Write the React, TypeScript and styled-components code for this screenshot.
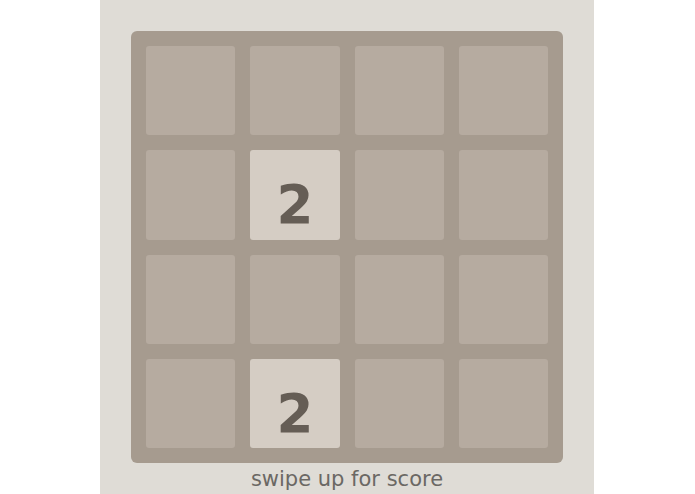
import styled, { createGlobalStyle } from 'styled-components';

const GlobalStyle = createGlobalStyle`
  html, body {
    margin: 0;
    padding: 0;
    background: #ffffff;
  }
  body {
    font-family: "DejaVu Sans", sans-serif;
  }
`;

const Page = styled.div`
  width: 100vw;
  height: 100vh;
  display: flex;
  justify-content: center;
  padding-right: 1px;
  box-sizing: border-box;
`;

const Panel = styled.div`
  width: 494px;
  height: 494px;
  background: #dfdcd6;
  display: flex;
  flex-direction: column;
  align-items: center;
  padding-top: 31px;
  box-sizing: border-box;
`;

const Board = styled.div`
  width: 432px;
  height: 432px;
  box-sizing: border-box;
  padding: 15px;
  background: #a69b8f;
  border-radius: 6px;
  display: grid;
  grid-template-columns: repeat(4, 1fr);
  grid-template-rows: repeat(4, 1fr);
  gap: 15px;
`;

const Tile = styled.div<{ $value?: number }>`
  border-radius: 3px;
  background: ${(p) => (p.$value ? '#d5cdc4' : '#b6aba0')};
  color: #655d55;
  font-family: "DejaVu Sans", sans-serif;
  font-weight: bold;
  font-size: 53px;
  display: flex;
  align-items: center;
  justify-content: center;
  line-height: 1;
  padding-top: 20px;
  box-sizing: border-box;
`;

const Caption = styled.div`
  flex: 1;
  display: flex;
  align-items: center;
  justify-content: center;
  color: #6b6864;
  font-size: 21px;
`;

const cells = [
  0, 0, 0, 0,
  0, 2, 0, 0,
  0, 0, 0, 0,
  0, 2, 0, 0,
];

export default function App() {
  return (
    <>
      <GlobalStyle />
      <Page>
        <Panel>
          <Board>
            {cells.map((v, i) => (
              <Tile key={i} $value={v}>
                {v ? v : null}
              </Tile>
            ))}
          </Board>
          <Caption>swipe up for score</Caption>
        </Panel>
      </Page>
    </>
  );
}
